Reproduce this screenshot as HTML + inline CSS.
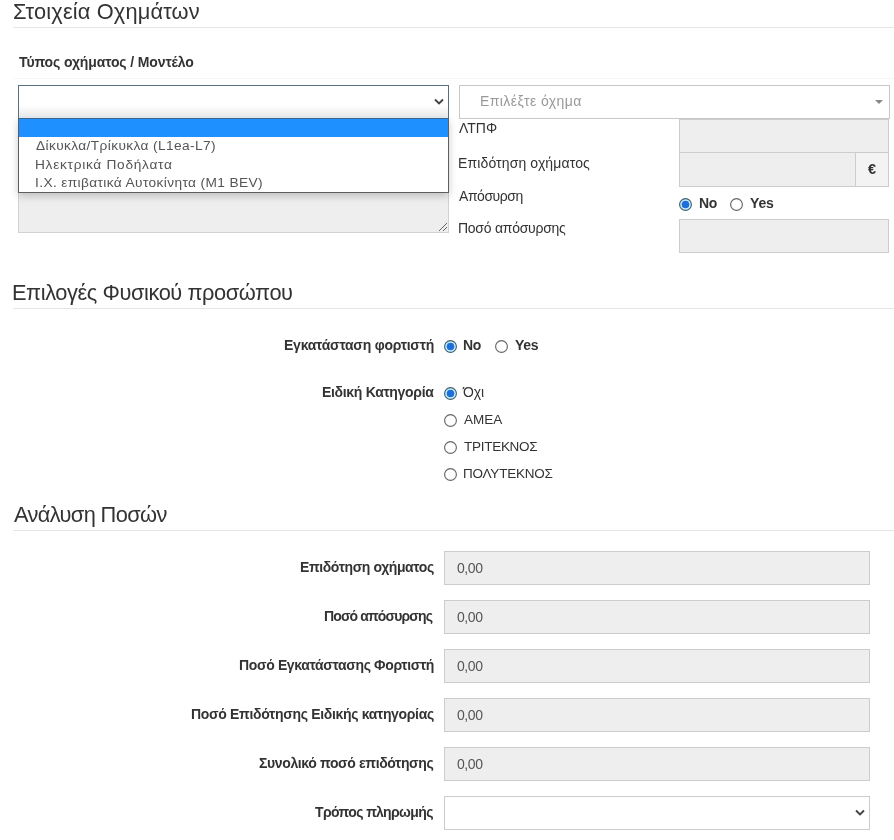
<!DOCTYPE html>
<html><head><meta charset="utf-8"><title>Στοιχεία Οχημάτων</title>
<style>
html,body{margin:0;padding:0;background:#fff;width:894px;height:840px;overflow:hidden;position:relative;font-family:"Liberation Sans",sans-serif;color:#333}
</style></head><body>
<div style="position:absolute;left:12.6px;top:1px;font-size:21.8px;line-height:21.8px;font-weight:400;letter-spacing:0.15px;color:#333;white-space:nowrap;will-change:transform">Στοιχεία Οχημάτων</div>
<div style="position:absolute;left:13px;top:27px;width:881px;height:1px;box-sizing:border-box;background:#e5e5e5"></div>
<div style="position:absolute;left:18.6px;top:55px;font-size:14px;line-height:14px;font-weight:700;letter-spacing:-0.122px;color:#333;white-space:nowrap;will-change:transform">Τύπος οχήματος / Μοντέλο</div>
<div style="position:absolute;left:13px;top:78px;width:881px;height:1px;box-sizing:border-box;background:#f6f6f6"></div>
<div style="position:absolute;left:18px;top:119px;width:431px;height:114px;box-sizing:border-box;background:#eee;border:1px solid #d2d2d2"></div>
<svg style="position:absolute;left:437px;top:221px" width="11" height="11" viewBox="0 0 11 11"><path d="M2 10 L10 2 M6 10 L10 6" stroke="#666" stroke-width="1" fill="none"/></svg>
<div style="position:absolute;left:18px;top:85px;width:431px;height:34px;box-sizing:border-box;background:linear-gradient(to bottom,#fff 0,#fff 62%,#f8f8f8 72%,#eeeeee 88%,#e8eef6 100%);border:1px solid #56707f"></div>
<svg style="position:absolute;left:433px;top:98px" width="12" height="8" viewBox="0 0 12 8"><path d="M2 1.5 L6 5.5 L10 1.5" fill="none" stroke="#444" stroke-width="1.9"/></svg>
<div style="position:absolute;left:459px;top:85px;width:431px;height:34px;box-sizing:border-box;background:#fff;border:1px solid #c8c8c8"></div>
<div style="position:absolute;left:479.5px;top:94px;font-size:14px;line-height:14px;font-weight:400;letter-spacing:0.408px;color:#999;white-space:nowrap;will-change:transform">Επιλέξτε όχημα</div>
<div style="position:absolute;left:875px;top:100px;width:0;height:0;border-left:4px solid transparent;border-right:4px solid transparent;border-top:4px solid #888"></div>
<div style="position:absolute;left:458.8px;top:121px;font-size:14px;line-height:14px;font-weight:400;letter-spacing:0.0px;color:#333;white-space:nowrap;will-change:transform">ΛΤΠΦ</div>
<div style="position:absolute;left:458.2px;top:156px;font-size:14px;line-height:14px;font-weight:400;letter-spacing:0.124px;color:#333;white-space:nowrap;will-change:transform">Επιδότηση οχήματος</div>
<div style="position:absolute;left:459.2px;top:189px;font-size:14px;line-height:14px;font-weight:400;letter-spacing:-0.457px;color:#333;white-space:nowrap;will-change:transform">Απόσυρση</div>
<div style="position:absolute;left:458.2px;top:221px;font-size:14px;line-height:14px;font-weight:400;letter-spacing:-0.262px;color:#333;white-space:nowrap;will-change:transform">Ποσό απόσυρσης</div>
<div style="position:absolute;left:679px;top:119px;width:210px;height:34px;box-sizing:border-box;background:#eee;border:1px solid #ccc"></div>
<div style="position:absolute;left:679px;top:152px;width:177px;height:35px;box-sizing:border-box;background:#eee;border:1px solid #ccc"></div>
<div style="position:absolute;left:855px;top:152px;width:34px;height:35px;box-sizing:border-box;background:#f3f3f3;border:1px solid #ccc"></div>
<div style="position:absolute;left:867.5px;top:161.5px;font-size:14.5px;line-height:14.5px;font-weight:700;letter-spacing:0px;color:#333;white-space:nowrap;will-change:transform">€</div>
<svg style="position:absolute;left:679px;top:198px" width="13" height="13" viewBox="0 0 13 13"><circle cx="6.5" cy="6.5" r="5.9" fill="#c9f1fc" stroke="#415f73" stroke-width="1.15"/><circle cx="6.5" cy="6.5" r="3.8" fill="#1e6fd9"/></svg>
<div style="position:absolute;left:698.7px;top:196px;font-size:14px;line-height:14px;font-weight:700;letter-spacing:-0.3px;color:#333;white-space:nowrap;will-change:transform">No</div>
<svg style="position:absolute;left:730px;top:198px" width="13" height="13" viewBox="0 0 13 13"><circle cx="6.5" cy="6.5" r="5.9" fill="#fff" stroke="#666" stroke-width="1.15"/></svg>
<div style="position:absolute;left:749.8px;top:196px;font-size:14px;line-height:14px;font-weight:700;letter-spacing:-0.15px;color:#333;white-space:nowrap;will-change:transform">Yes</div>
<div style="position:absolute;left:679px;top:219px;width:210px;height:34px;box-sizing:border-box;background:#eee;border:1px solid #ccc"></div>
<div style="position:absolute;left:18px;top:118px;width:431px;height:75px;box-sizing:border-box;background:#fff;border:1px solid #5e5e5e;border-top-color:#3f6688;box-shadow:0 3px 8px rgba(0,0,0,0.2)"><div style="position:absolute;left:0;top:0;width:429px;height:18px;background:#1e90ff"></div></div>
<div style="position:absolute;left:35.7px;top:139px;font-size:13.7px;line-height:13.7px;font-weight:400;letter-spacing:0.388px;color:#555;white-space:nowrap;will-change:transform">Δίκυκλα/Τρίκυκλα (L1ea-L7)</div>
<div style="position:absolute;left:34.7px;top:158px;font-size:13.7px;line-height:13.7px;font-weight:400;letter-spacing:0.718px;color:#555;white-space:nowrap;will-change:transform">Ηλεκτρικά Ποδήλατα</div>
<div style="position:absolute;left:34.7px;top:176px;font-size:13.7px;line-height:13.7px;font-weight:400;letter-spacing:0.385px;color:#555;white-space:nowrap;will-change:transform">Ι.Χ. επιβατικά Αυτοκίνητα (M1 BEV)</div>
<div style="position:absolute;left:12.3px;top:282px;font-size:21.8px;line-height:21.8px;font-weight:400;letter-spacing:-0.421px;color:#333;white-space:nowrap;will-change:transform">Επιλογές Φυσικού προσώπου</div>
<div style="position:absolute;left:13px;top:308px;width:881px;height:1px;box-sizing:border-box;background:#e5e5e5"></div>
<div style="position:absolute;left:283.7px;top:338px;font-size:14px;line-height:14px;font-weight:700;letter-spacing:-0.247px;color:#333;white-space:nowrap;will-change:transform">Εγκατάσταση φορτιστή</div>
<svg style="position:absolute;left:444px;top:340px" width="13" height="13" viewBox="0 0 13 13"><circle cx="6.5" cy="6.5" r="5.9" fill="#c9f1fc" stroke="#415f73" stroke-width="1.15"/><circle cx="6.5" cy="6.5" r="3.8" fill="#1e6fd9"/></svg>
<div style="position:absolute;left:463.4px;top:338px;font-size:14px;line-height:14px;font-weight:700;letter-spacing:-0.4px;color:#333;white-space:nowrap;will-change:transform">No</div>
<svg style="position:absolute;left:495px;top:340px" width="13" height="13" viewBox="0 0 13 13"><circle cx="6.5" cy="6.5" r="5.9" fill="#fff" stroke="#666" stroke-width="1.15"/></svg>
<div style="position:absolute;left:515.0px;top:338px;font-size:14px;line-height:14px;font-weight:700;letter-spacing:-0.25px;color:#333;white-space:nowrap;will-change:transform">Yes</div>
<div style="position:absolute;left:321.7px;top:385px;font-size:14px;line-height:14px;font-weight:700;letter-spacing:-0.313px;color:#333;white-space:nowrap;will-change:transform">Ειδική Κατηγορία</div>
<svg style="position:absolute;left:444px;top:387px" width="13" height="13" viewBox="0 0 13 13"><circle cx="6.5" cy="6.5" r="5.9" fill="#c9f1fc" stroke="#415f73" stroke-width="1.15"/><circle cx="6.5" cy="6.5" r="3.8" fill="#1e6fd9"/></svg>
<div style="position:absolute;left:463px;top:385px;font-size:14px;line-height:14px;font-weight:400;letter-spacing:-0.1px;color:#333;white-space:nowrap;will-change:transform">Όχι</div>
<svg style="position:absolute;left:444px;top:414px" width="13" height="13" viewBox="0 0 13 13"><circle cx="6.5" cy="6.5" r="5.9" fill="#fff" stroke="#666" stroke-width="1.15"/></svg>
<div style="position:absolute;left:464.0px;top:413px;font-size:13.5px;line-height:13.5px;font-weight:400;letter-spacing:-0.033px;color:#333;white-space:nowrap;will-change:transform">ΑΜΕΑ</div>
<svg style="position:absolute;left:444px;top:441px" width="13" height="13" viewBox="0 0 13 13"><circle cx="6.5" cy="6.5" r="5.9" fill="#fff" stroke="#666" stroke-width="1.15"/></svg>
<div style="position:absolute;left:464.0px;top:440px;font-size:13.5px;line-height:13.5px;font-weight:400;letter-spacing:-0.275px;color:#333;white-space:nowrap;will-change:transform">ΤΡΙΤΕΚΝΟΣ</div>
<svg style="position:absolute;left:444px;top:468px" width="13" height="13" viewBox="0 0 13 13"><circle cx="6.5" cy="6.5" r="5.9" fill="#fff" stroke="#666" stroke-width="1.15"/></svg>
<div style="position:absolute;left:463.0px;top:467px;font-size:13.5px;line-height:13.5px;font-weight:400;letter-spacing:-0.222px;color:#333;white-space:nowrap;will-change:transform">ΠΟΛΥΤΕΚΝΟΣ</div>
<div style="position:absolute;left:13.8px;top:504px;font-size:21.8px;line-height:21.8px;font-weight:400;letter-spacing:-0.625px;color:#333;white-space:nowrap;will-change:transform">Ανάλυση Ποσών</div>
<div style="position:absolute;left:13px;top:530px;width:881px;height:1px;box-sizing:border-box;background:#e5e5e5"></div>
<div style="position:absolute;left:299.7px;top:560px;font-size:14px;line-height:14px;font-weight:700;letter-spacing:-0.394px;color:#333;white-space:nowrap;will-change:transform">Επιδότηση οχήματος</div>
<div style="position:absolute;left:444px;top:551px;width:426px;height:34px;box-sizing:border-box;background:#eee;border:1px solid #ccc"></div>
<div style="position:absolute;left:456.7px;top:561px;font-size:14px;line-height:14px;font-weight:400;letter-spacing:-0.433px;color:#555;white-space:nowrap;will-change:transform">0,00</div>
<div style="position:absolute;left:324.4px;top:609px;font-size:14px;line-height:14px;font-weight:700;letter-spacing:-0.877px;color:#333;white-space:nowrap;will-change:transform">Ποσό απόσυρσης</div>
<div style="position:absolute;left:444px;top:600px;width:426px;height:34px;box-sizing:border-box;background:#eee;border:1px solid #ccc"></div>
<div style="position:absolute;left:456.7px;top:610px;font-size:14px;line-height:14px;font-weight:400;letter-spacing:-0.433px;color:#555;white-space:nowrap;will-change:transform">0,00</div>
<div style="position:absolute;left:239.0px;top:658px;font-size:14px;line-height:14px;font-weight:700;letter-spacing:-0.36px;color:#333;white-space:nowrap;will-change:transform">Ποσό Εγκατάστασης Φορτιστή</div>
<div style="position:absolute;left:444px;top:649px;width:426px;height:34px;box-sizing:border-box;background:#eee;border:1px solid #ccc"></div>
<div style="position:absolute;left:456.7px;top:659px;font-size:14px;line-height:14px;font-weight:400;letter-spacing:-0.433px;color:#555;white-space:nowrap;will-change:transform">0,00</div>
<div style="position:absolute;left:190.8px;top:707px;font-size:14px;line-height:14px;font-weight:700;letter-spacing:-0.327px;color:#333;white-space:nowrap;will-change:transform">Ποσό Επιδότησης Ειδικής κατηγορίας</div>
<div style="position:absolute;left:444px;top:698px;width:426px;height:34px;box-sizing:border-box;background:#eee;border:1px solid #ccc"></div>
<div style="position:absolute;left:456.7px;top:708px;font-size:14px;line-height:14px;font-weight:400;letter-spacing:-0.433px;color:#555;white-space:nowrap;will-change:transform">0,00</div>
<div style="position:absolute;left:258.6px;top:756px;font-size:14px;line-height:14px;font-weight:700;letter-spacing:-0.374px;color:#333;white-space:nowrap;will-change:transform">Συνολικό ποσό επιδότησης</div>
<div style="position:absolute;left:444px;top:747px;width:426px;height:34px;box-sizing:border-box;background:#eee;border:1px solid #ccc"></div>
<div style="position:absolute;left:456.7px;top:757px;font-size:14px;line-height:14px;font-weight:400;letter-spacing:-0.433px;color:#555;white-space:nowrap;will-change:transform">0,00</div>
<div style="position:absolute;left:315.3px;top:805px;font-size:14px;line-height:14px;font-weight:700;letter-spacing:-0.593px;color:#333;white-space:nowrap;will-change:transform">Τρόπος πληρωμής</div>
<div style="position:absolute;left:444px;top:796px;width:426px;height:34px;box-sizing:border-box;background:#fff;border:1px solid #ccc"></div>
<svg style="position:absolute;left:854px;top:809px" width="12" height="8" viewBox="0 0 12 8"><path d="M2 1.5 L6 5.5 L10 1.5" fill="none" stroke="#444" stroke-width="1.9"/></svg>
</body></html>
